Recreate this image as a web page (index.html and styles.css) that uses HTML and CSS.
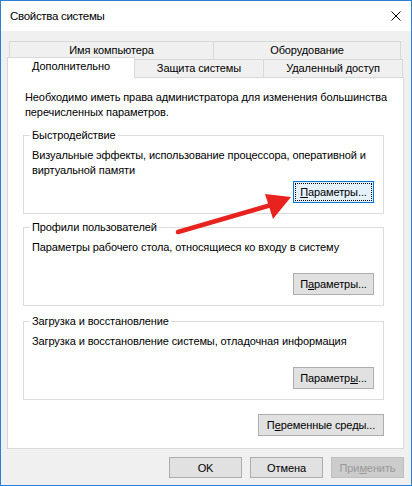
FILE: index.html
```html
<!DOCTYPE html>
<html lang="ru">
<head>
    <meta charset="UTF-8">
    <title>Свойства системы</title>
    <link rel="stylesheet" href="styles.css">
</head>
<body>
    <div class="window">
        <div class="titlebar">
            <span class="title">Свойства системы</span>
            <svg class="close" width="10" height="10" viewBox="0 0 10 10">
                <path d="M0.5 0.5 L9.5 9.5 M9.5 0.5 L0.5 9.5" stroke="#000" stroke-width="1"/>
            </svg>
        </div>
        <div class="dialog">
            <div class="tabs">
                <div class="tab-row top">
                    <div class="tab w1">Имя компьютера</div>
                    <div class="tab w2">Оборудование</div>
                </div>
                <div class="tab-row bottom">
                    <div class="tab w3 active">Дополнительно</div>
                    <div class="tab w4">Защита системы</div>
                    <div class="tab w5">Удаленный доступ</div>
                </div>
            </div>
            <div class="panel">
                <p class="note">Необходимо иметь права администратора для изменения большинства перечисленных параметров.</p>

                <fieldset class="group first">
                    <legend>Быстродействие</legend>
                    <p class="desc">Визуальные эффекты, использование процессора, оперативной и виртуальной памяти</p>
                    <div class="actions"><button class="btn focus"><span><u>П</u>араметры...</span></button></div>
                </fieldset>

                <fieldset class="group">
                    <legend>Профили пользователей</legend>
                    <p class="desc">Параметры рабочего стола, относящиеся ко входу в систему</p>
                    <div class="actions"><button class="btn"><span>П<u>а</u>раметры...</span></button></div>
                </fieldset>

                <fieldset class="group last">
                    <legend>Загрузка и восстановление</legend>
                    <p class="desc">Загрузка и восстановление системы, отладочная информация</p>
                    <div class="actions"><button class="btn"><span>Параметр<u>ы</u>...</span></button></div>
                </fieldset>

                <div class="env">
                    <button class="btn wide"><span>П<u>е</u>ременные среды...</span></button>
                </div>
            </div>
            <div class="footer">
                <button class="btn small">OK</button>
                <button class="btn small">Отмена</button>
                <button class="btn small" disabled>При<u>м</u>енить</button>
            </div>
        </div>

        <!-- стрелка поверх окна -->
        <svg class="arrow" width="412" height="486" viewBox="0 0 412 486">
            <path d="M178 232 L278 203" stroke="#e8231f" stroke-width="4.5" stroke-linecap="round"/>
            <path d="M291 197 L265 194 L273 219 Z" fill="#e8231f"/>
        </svg>
    </div>
</body>
</html>
```

FILE: styles.css
```css
body {
    margin: 0;
    background: #fff;
    font-family: "Liberation Sans", Arial, sans-serif;
    font-size: 11px;
    letter-spacing: -0.1px;
    color: #000;
}
.window {
    position: relative;
    width: 412px;
    height: 486px;
    box-sizing: border-box;
    border: 1px solid #2b7fd4;
    background: #f0f0f0;
    display: flex;
    flex-direction: column;
}
.titlebar {
    height: 30px;
    background: #fff;
    display: flex;
    align-items: center;
    justify-content: space-between;
    padding: 0 10px 0 9px;
    flex-shrink: 0;
}
.title {
    font-size: 11.5px;
    letter-spacing: -0.3px;
}
.close {
    margin-top: -1px;
}
.dialog {
    padding: 10px 7px 0 6px;
}

/* вкладки */
.tabs {
    display: flex;
    flex-direction: column;
}
.tab-row {
    display: flex;
    height: 18px;
}
.tab-row.top {
    margin-left: 2px;
}
.tab {
    box-sizing: border-box;
    height: 18px;
    border: 1px solid #d9d9d9;
    border-bottom: none;
    background: #f0f0f0;
    text-align: center;
    line-height: 17px;
}
.tab + .tab {
    border-left: none;
}
.w1 { width: 205px; }
.w2 { width: 187px; }
.w3 { width: 128px; }
.w4 { width: 129px; }
.w5 { width: 139px; }
.tab.active {
    background: #fff;
    height: 21px;
    margin-top: -2px;
    margin-bottom: -1px;
    position: relative;
    z-index: 1;
    line-height: 17px;
}

/* панель */
.panel {
    box-sizing: border-box;
    height: 372px;
    background: #fff;
    border: 1px solid #d9d9d9;
    padding: 12px 17px 0 15px;
}
.note {
    margin: 0 -12px 0 2px;
    line-height: 15px;
}
.group {
    margin: 6px 2px 0 0;
    padding: 0 9px 10px 8px;
    border: 1px solid #dcdcdc;
}
.group.first {
    margin-top: 8px;
}
.group.last {
    margin-top: 8px;
}
.group legend {
    padding: 0 2px;
    margin-left: -2px;
    line-height: 15px;
}
.desc {
    margin: 5px 0 3px 0;
    line-height: 15px;
    min-height: 30px;
}
.actions {
    display: flex;
    justify-content: flex-end;
}
.env {
    display: flex;
    justify-content: flex-end;
    margin: 14px 2px 0 0;
}

/* кнопки */
.btn {
    box-sizing: border-box;
    width: 81px;
    height: 22px;
    padding: 0;
    background: #e1e1e1;
    border: 1px solid #adadad;
    font-family: inherit;
    font-size: 11px;
    letter-spacing: -0.1px;
    color: #000;
}
.btn.focus {
    background: #e5f1fb;
    border-color: #0078d7;
    padding: 1px;
}
.btn.focus span {
    display: block;
    height: 100%;
    box-sizing: border-box;
    border: 1px dotted #000;
    line-height: 16px;
}
.btn.wide {
    width: 126px;
}
.btn.small {
    width: 73px;
    height: 21px;
}
.btn:disabled {
    background: #cccccc;
    border-color: #bfbfbf;
    color: #9a9a9a;
}
.footer {
    display: flex;
    justify-content: flex-end;
    gap: 8px;
    margin-top: 8px;
}

.arrow {
    position: absolute;
    left: -1px;
    top: -1px;
    pointer-events: none;
}
```
